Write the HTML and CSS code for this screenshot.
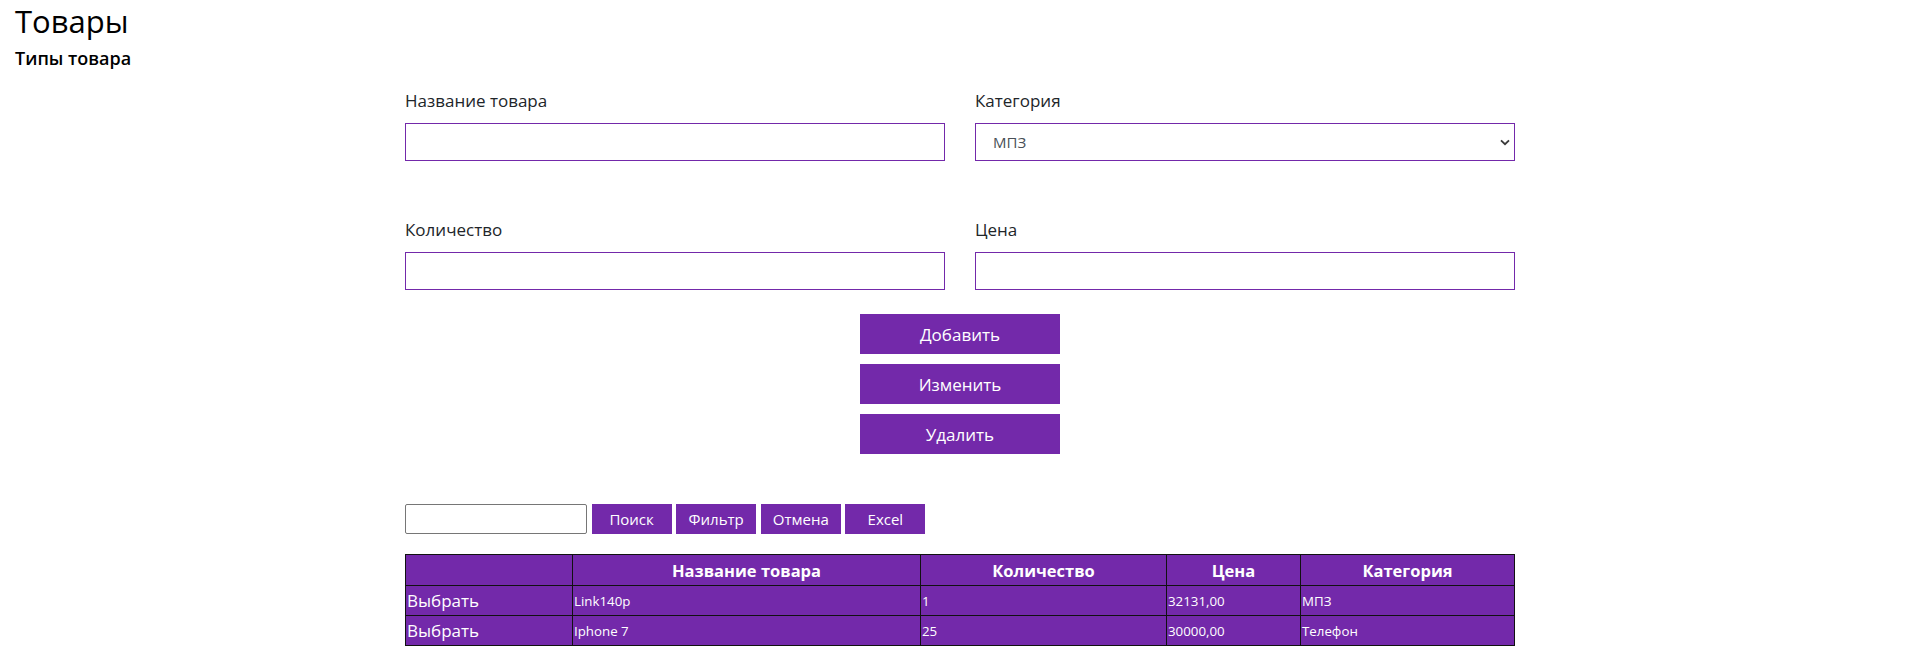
FILE: index.html
```html
<!DOCTYPE html>
<html lang="ru">
<head>
<meta charset="utf-8">
<title>Товары</title>
<link rel="stylesheet" href="styles.css">
</head>
<body>
<header class="page-head">
  <h1 class="title">Товары</h1>
  <h2 class="subtitle">Типы товара</h2>
</header>
<main class="container">
  <form class="product-form">
    <div class="field">
      <label class="field-label">Название товара</label>
      <input class="field-input" type="text">
    </div>
    <div class="field">
      <label class="field-label">Категория</label>
      <div class="select-wrap">
        <select class="field-input field-select">
          <option>МПЗ</option>
          <option>Телефон</option>
        </select>
        <svg class="select-arrow" width="10" height="7" viewBox="0 0 10 7"><path d="M1 1.3 L5 5.2 L9 1.3" fill="none" stroke="#3a3a3a" stroke-width="1.8"/></svg>
      </div>
    </div>
    <div class="field">
      <label class="field-label">Количество</label>
      <input class="field-input" type="text">
    </div>
    <div class="field">
      <label class="field-label">Цена</label>
      <input class="field-input" type="text">
    </div>
  </form>
  <div class="actions">
    <button class="btn-main" type="button">Добавить</button>
    <button class="btn-main" type="button">Изменить</button>
    <button class="btn-main" type="button">Удалить</button>
  </div>
  <div class="search-row">
    <input class="search-input" type="text">
    <button class="btn-small" type="button">Поиск</button>
    <button class="btn-small" type="button">Фильтр</button>
    <button class="btn-small" type="button">Отмена</button>
    <button class="btn-small" type="button">Excel</button>
  </div>
  <table class="grid">
    <colgroup>
      <col class="c1"><col class="c2"><col class="c3"><col class="c4"><col class="c5">
    </colgroup>
    <thead>
      <tr><th></th><th>Название товара</th><th>Количество</th><th>Цена</th><th>Категория</th></tr>
    </thead>
    <tbody>
      <tr><td class="pick">Выбрать</td><td>Link140p</td><td>1</td><td>32131,00</td><td>МПЗ</td></tr>
      <tr><td class="pick">Выбрать</td><td>Iphone 7</td><td>25</td><td>30000,00</td><td>Телефон</td></tr>
    </tbody>
  </table>
</main>
</body>
</html>
```
FILE: styles.css
```css
html, body {
  margin: 0;
  padding: 0;
  background: #fff;
}
body {
  font-family: "Open Sans", "Noto Sans", sans-serif;
  color: #212529;
}
.page-head {
  padding-left: 15px;
}
.title {
  margin: 0;
  font-size: 31px;
  font-weight: 400;
  line-height: 42px;
  color: #000;
}
.subtitle {
  margin: 4px 0 0;
  font-size: 18px;
  font-weight: 600;
  line-height: 24px;
  color: #000;
}
.container {
  width: 1110px;
  margin: 0 auto;
  padding-left: 4px;
}
.product-form {
  display: grid;
  grid-template-columns: 540px 540px;
  column-gap: 30px;
  row-gap: 56px;
  margin-top: 18px;
}
.field {
  display: flex;
  flex-direction: column;
}
.field-label {
  font-size: 17px;
  line-height: 26px;
  margin-bottom: 9px;
  color: #212529;
}
.field-input {
  box-sizing: border-box;
  height: 38px;
  width: 100%;
  border: 1px solid #7329aa;
  border-radius: 0;
  background: #fff;
  font-family: inherit;
  font-size: 15px;
  color: #495057;
  padding: 0 17px;
  outline: none;
}
.select-wrap {
  position: relative;
}
.field-select {
  appearance: none;
  -webkit-appearance: none;
}
.select-arrow {
  position: absolute;
  right: 5px;
  top: 16px;
  pointer-events: none;
}
.actions {
  display: flex;
  flex-direction: column;
  align-items: center;
  gap: 10px;
  margin-top: 24px;
}
.btn-main {
  width: 200px;
  height: 40px;
  border: 0;
  background: #7329aa;
  color: #fff;
  font-family: inherit;
  font-size: 17px;
}
.search-row {
  display: flex;
  align-items: center;
  gap: 4.6px;
  margin-top: 50px;
}
.search-input {
  box-sizing: border-box;
  width: 182px;
  height: 30px;
  border: 1px solid #767676;
  border-radius: 2px;
}
.btn-small {
  width: 80px;
  height: 30px;
  border: 0;
  background: #7329aa;
  color: #fff;
  font-family: inherit;
  font-size: 15px;
}
.grid {
  margin-top: 20px;
  width: 1110px;
  border-collapse: collapse;
  table-layout: fixed;
  background: #7329aa;
  color: #fff;
}
.c1 { width: 167px; }
.c2 { width: 348px; }
.c3 { width: 246px; }
.c4 { width: 134px; }
.c5 { width: 214px; }
.grid th, .grid td {
  border: 1px solid #111;
  padding: 0 1px;
}
.grid th {
  height: 30px;
  font-size: 16.5px;
  font-weight: 700;
  text-align: center;
}
.grid td {
  height: 29px;
  font-size: 13.3px;
  text-align: left;
}
.grid td.pick {
  font-size: 17px;
}
```
